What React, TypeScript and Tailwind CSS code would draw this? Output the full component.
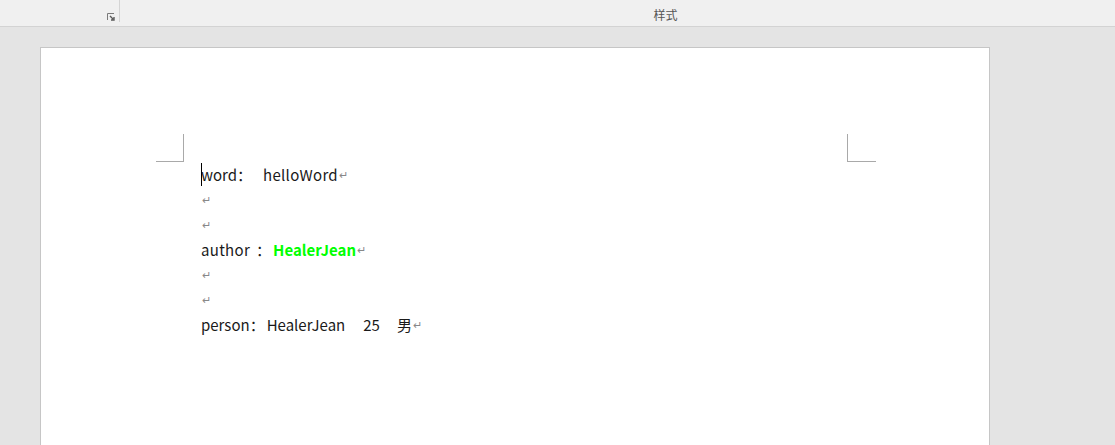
import React from 'react';

const Ret = () => <span className="ml-[1px] align-middle text-[11px] leading-none text-[#888]">↵</span>;

export default function App() {
  return (
    <div className="h-[445px] w-[1115px] overflow-hidden bg-[#e4e4e4] font-['Noto_Sans_CJK_SC',sans-serif]">
      {/* ribbon strip */}
      <div className="flex h-[27px] border-b border-[#d3d3d3] bg-[#f0f0f0]">
        <div className="flex w-[119px] items-end justify-end pb-[5px] pr-[4px]">
          <svg width="8" height="8" viewBox="0 0 8 8" className="block">
            <path d="M0.5 7V0.5H7" fill="none" stroke="#7a7a7a" strokeWidth="1" />
            <path d="M3 3L6 6M4 7H7V4" fill="none" stroke="#5a5a5a" strokeWidth="1.4" />
          </svg>
        </div>
        <div className="h-[22px] w-px bg-[#d4d4d4]" />
        <div className="flex flex-1 items-center justify-center pt-[3px] text-[12px] text-[#555]">
          <span className="ml-[96px]">样式</span>
        </div>
      </div>

      {/* document area */}
      <div className="pl-[40px] pt-[20px]">
        <div className="h-[420px] w-[950px] border border-[#c6c6c6] bg-white pl-[115px] pr-[113px] pt-[86px]">
          <div className="flex justify-between">
            <div className="h-[28px] w-[28px] border-b border-r border-[#a9a9a9]" />
            <div className="h-[28px] w-[29px] border-b border-l border-[#a9a9a9]" />
          </div>
          <div className="ml-[45px] text-[15px] leading-[25px] text-[#1a1a1a]">
            <div className="relative flex h-[25px] items-center whitespace-pre">
              <span className="absolute left-0 top-[1px] h-[23px] w-px bg-black" />
              <span>word：</span>
              <span className="ml-[11px] tracking-[0.3px]">helloWord</span>
              <Ret />
            </div>
            <div className="flex h-[25px] items-center"><Ret /></div>
            <div className="flex h-[25px] items-center"><Ret /></div>
            <div className="flex h-[25px] items-center whitespace-pre">
              <span className="tracking-[0.3px]">author</span>
              <span className="ml-[6px]">：</span>
              <span className="ml-[2px] font-bold text-[#00ff00]">HealerJean</span>
              <Ret />
            </div>
            <div className="flex h-[25px] items-center"><Ret /></div>
            <div className="flex h-[25px] items-center"><Ret /></div>
            <div className="flex h-[25px] items-center whitespace-pre">
              <span>person：</span>
              <span className="ml-[2px]">HealerJean</span>
              <span className="ml-[18px]">25</span>
              <span className="ml-[17px]">男</span>
              <Ret />
            </div>
          </div>
        </div>
      </div>
    </div>
  );
}
